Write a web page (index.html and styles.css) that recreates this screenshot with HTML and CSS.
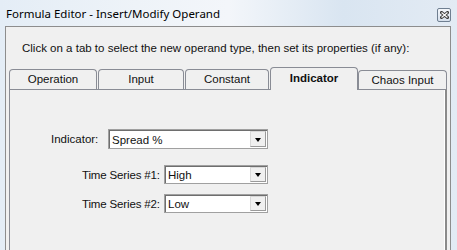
FILE: index.html
```html
<!DOCTYPE html>
<html>
<head>
<meta charset="utf-8">
<link rel="stylesheet" href="styles.css">
</head>
<body>
<div class="window">
  <div class="titlebar">
    <span class="title">Formula Editor - Insert/Modify Operand</span>
    <span class="close">
      <svg width="9" height="8" viewBox="0 0 9 8"><path d="M1.5 1.5 L7.5 6.5 M7.5 1.5 L1.5 6.5" stroke="#3a3a3a" stroke-width="3" stroke-linecap="square"/><path d="M1.5 1.5 L7.5 6.5 M7.5 1.5 L1.5 6.5" stroke="#ffffff" stroke-width="1.2"/></svg>
    </span>
  </div>
  <div class="client">
    <p class="intro">Click on a tab to select the new operand type, then set its properties (if any):</p>
    <div class="tabs">
      <div class="tab t-op">Operation</div>
      <div class="tab t-in">Input</div>
      <div class="tab t-co">Constant</div>
      <div class="tab t-ind active">Indicator</div>
      <div class="tab t-ch">Chaos Input</div>
    </div>
    <div class="panel">
      <div class="row row-ind">
        <span class="label l-ind">Indicator:</span>
        <div class="combo c-wide"><span class="val">Spread %</span><span class="btn"><span class="arrow"></span></span></div>
      </div>
      <div class="row row-ts1">
        <span class="label l-ts">Time Series #1:</span>
        <div class="combo c-narrow"><span class="val">High</span><span class="btn"><span class="arrow"></span></span></div>
      </div>
      <div class="row row-ts2">
        <span class="label l-ts">Time Series #2:</span>
        <div class="combo c-narrow"><span class="val">Low</span><span class="btn"><span class="arrow"></span></span></div>
      </div>
    </div>
  </div>
</div>
</body>
</html>
```
FILE: styles.css
```css
html, body {
  margin: 0;
  padding: 0;
  width: 457px;
  height: 250px;
  overflow: hidden;
}
.window {
  width: 457px;
  height: 250px;
  box-sizing: border-box;
  padding: 0 6px 0 5px;
  background: linear-gradient(to right, #e4edf6 0%, #eef3f8 30%, #f3f6fa 50%, #d9e5f1 75%, #e3ebf4 100%);
  display: flex;
  flex-direction: column;
  overflow: hidden;
}
.titlebar {
  height: 26px;
  flex: none;
  display: flex;
  align-items: center;
  justify-content: space-between;
  padding-left: 1px;
}
.title {
  font-family: "Noto Sans", sans-serif;
  font-size: 11.5px;
  color: #000;
  padding-top: 1px;
}
.close {
  width: 14px;
  height: 14px;
  box-sizing: border-box;
  border: 1px solid #6f7f91;
  border-radius: 2px;
  background: linear-gradient(#f4f7fb, #d6e0ec);
  display: flex;
  align-items: center;
  justify-content: center;
  margin-top: 3px;
}
.client {
  flex: 1;
  min-height: 0;
  display: flex;
  flex-direction: column;
  overflow: hidden;
  background: #f0f0f0;
  border: 1px solid #8d8d8d;
  border-bottom: none;
  font-family: "Liberation Sans", Arial, sans-serif;
  font-size: 11.5px;
  color: #111;
}
.intro {
  margin: 15px 0 0 16px;
  line-height: 13px;
  flex: none;
}
.tabs {
  flex: none;
  display: flex;
  align-items: flex-end;
  margin: 12px 0 0 3px;
  height: 22px;
  position: relative;
  z-index: 1;
}
.tab {
  box-sizing: border-box;
  height: 20px;
  border: 1px solid #898c95;
  border-bottom: none;
  border-radius: 4px 4px 0 0;
  background: #f0f0f0;
  display: flex;
  align-items: center;
  justify-content: center;
  padding-bottom: 1px;
}
.t-op { width: 88px; }
.t-in { width: 86px; margin-left: 1px; }
.t-co { width: 84px; margin-left: 1px; }
.t-ind { width: 88px; margin-left: 1px; }
.t-ch { width: 89px; height: 19px; }
.tab.active {
  height: 23px;
  margin-bottom: -1px;
  font-weight: bold;
  background: #f0f0f0;
  padding-bottom: 2px;
}
.panel {
  flex: 1;
  min-height: 0;
  margin: 0 3px;
  border: 1px solid #898c95;
  border-bottom: none;
  border-right: 2px solid #8a8a8a;
  box-shadow: inset -1px 0 #ffffff;
  box-sizing: border-box;
  padding-top: 39px;
}
.row {
  display: flex;
  align-items: center;
}
.row-ind { margin-left: 41px; }
.row-ts1 { margin-left: 72px; margin-top: 16px; }
.row-ts2 { margin-left: 72px; margin-top: 10px; }
.label { flex: none; }
.l-ind { width: 57px; }
.l-ts { width: 82px; letter-spacing: -0.15px; }
.combo {
  box-sizing: border-box;
  height: 20px;
  border: 1px solid #a0a0a0;
  box-shadow: inset 1px 1px #6e6e6e;
  background: #fff;
  display: flex;
  align-items: stretch;
}
.c-wide { width: 160px; height: 20px; }
.c-narrow { width: 104px; height: 19px; }
.val {
  flex: 1;
  padding-left: 3px;
  padding-top: 1px;
  display: flex;
  align-items: center;
}
.btn {
  width: 16px;
  margin: 1px 1px 1px 0;
  box-sizing: border-box;
  background: #f0f0f0;
  border: 1px solid #d8d8d8;
  border-right-color: #9a9a9a;
  border-bottom-color: #9a9a9a;
  display: flex;
  align-items: center;
  justify-content: center;
}
.arrow {
  width: 0;
  height: 0;
  border-left: 3.5px solid transparent;
  border-right: 3.5px solid transparent;
  border-top: 4px solid #000;
  margin-top: 1px;
}
```
